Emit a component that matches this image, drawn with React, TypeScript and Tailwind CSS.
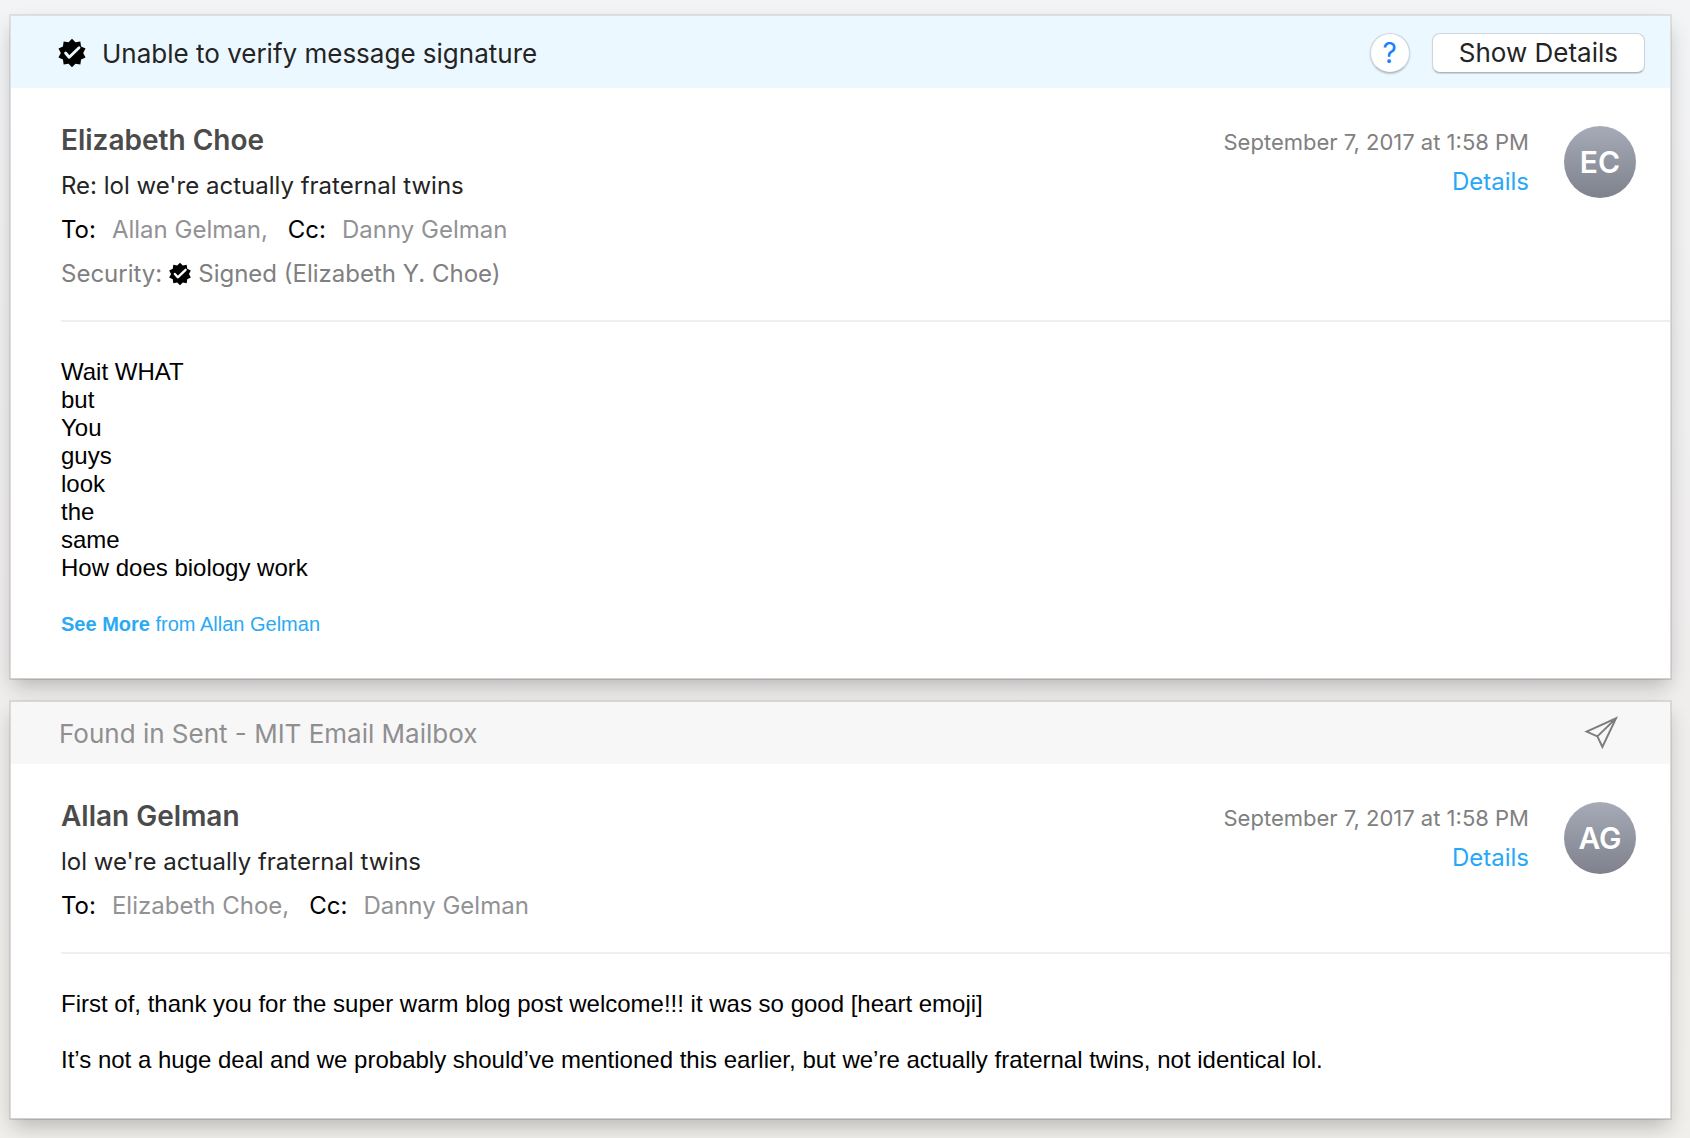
import React, { type ReactNode } from "react";

const SANS = "font-['Inter','Liberation_Sans',sans-serif]";

/* Ten-pointed seal outline, centred on the origin */
const SEAL_POINTS = Array.from({ length: 20 }, (_, i) => {
  const radius = i % 2 === 0 ? 14.2 : 11.2;
  const angle = (i * Math.PI) / 10;
  return `${(radius * Math.sin(angle)).toFixed(2)},${(-radius * Math.cos(angle)).toFixed(2)}`;
}).join(" ");

function SealIcon({ className, check }: { className: string; check: string }) {
  return (
    <svg viewBox="-15 -15 30 30" className={className} aria-hidden="true">
      <polygon points={SEAL_POINTS} fill="#000" />
      <path
        d="M-6.4 0 L-2.8 4.2 L7 -5.2"
        fill="none"
        stroke={check}
        strokeWidth="2.9"
        strokeLinecap="round"
        strokeLinejoin="round"
      />
    </svg>
  );
}

function PaperPlaneIcon() {
  return (
    <svg viewBox="0 0 36 36" className="size-9 shrink-0" role="img" aria-label="Sent">
      <path
        d="M3.6 16.6 L33 3.4 L19.4 32 L14.4 21.4 Z M14.4 21.4 L33 3.4"
        fill="none"
        stroke="#7d7d7d"
        strokeWidth="2"
        strokeLinejoin="miter"
      />
    </svg>
  );
}

type Message = {
  from: string;
  initials: string;
  subject: string;
  to: string;
  cc: string;
  date: string;
};

function MessageCard({
  message,
  banner,
  security,
  divider,
  children,
}: {
  message: Message;
  banner: ReactNode;
  security?: ReactNode;
  divider: string;
  children: ReactNode;
}) {
  return (
    <article className="relative border-2 border-black/8 border-b-black/12 bg-white bg-clip-padding shadow-[0_10px_20px_-4px_rgba(0,0,0,0.24)]">
      {banner}
      <div className="pl-[50px]">
        <header className={`flex items-start gap-[35px] border-b-2 pt-7 pr-[34px] pb-6 ${divider}`}>
          <div className="min-w-0 flex-1 text-[24px] leading-[44px]">
            <h2 className="text-[28px] leading-[48px] font-semibold text-[#4b4b4b]">{message.from}</h2>
            <p className="text-[#242424]">{message.subject}</p>
            <p className="flex">
              <span className="mr-4 text-black">To:</span>
              <span className="mr-5 text-[#929295]">{message.to},</span>
              <span className="mr-4 text-black">Cc:</span>
              <span className="text-[#929295]">{message.cc}</span>
            </p>
            {security}
          </div>
          <div className="mt-1.5 flex flex-col items-end leading-10">
            <time className="text-[22px] text-[#808080]">{message.date}</time>
            <a href="#details" className="text-[24px] text-[#27a8f7]">Details</a>
          </div>
          <div className="mt-2.5 flex size-[72px] items-center justify-center rounded-full bg-linear-to-b from-[#a6abb7] to-[#7f828d] text-[30px] font-semibold text-white">
            {message.initials}
          </div>
        </header>
        <div className="pt-9 pr-[34px] pb-11 font-['Liberation_Sans',Arial,sans-serif] text-[24px] leading-7 text-black">
          {children}
        </div>
      </div>
    </article>
  );
}

const LINES = ["Wait WHAT", "but", "You", "guys", "look", "the", "same", "How does biology work"];

export default function App() {
  return (
    <main
      className={`flex min-h-screen flex-col gap-5 bg-linear-to-b from-[#f3f4f6] via-[#f0eeee] to-[#f0efeb] pt-[14px] pr-[18px] pb-[18px] pl-[9px] ${SANS}`}
    >
      <MessageCard
        divider="border-[#f0eeef]"
        message={{
          from: "Elizabeth Choe",
          initials: "EC",
          subject: "Re: lol we're actually fraternal twins",
          to: "Allan Gelman",
          cc: "Danny Gelman",
          date: "September 7, 2017 at 1:58 PM",
        }}
        banner={
          <div className="flex h-[72px] items-center bg-[#ecf8ff] pt-0.5 pr-[25px] pl-[46px]">
            <SealIcon className="size-[30px] shrink-0" check="#ecf8ff" />
            <p className="ml-[15px] flex-1 text-[26px] text-[#242424]">Unable to verify message signature</p>
            <button
              type="button"
              aria-label="Help"
              className="size-10 rounded-full border border-[#ccd6dc] border-b-[#b4bcc1] bg-white text-[28px] leading-9 text-[#1a80fb] shadow-[0_1px_2px_rgba(0,0,0,0.2)]"
            >
              ?
            </button>
            <button
              type="button"
              className="ml-[22px] h-10 rounded-lg border border-[#ccd6dc] border-b-[#b0b6ba] bg-white px-[26px] text-[26px] leading-9 text-[#242424] shadow-[0_1px_1px_rgba(0,0,0,0.15)]"
            >
              Show Details
            </button>
          </div>
        }
        security={
          <p className="flex items-center text-[#808080]">
            Security:
            <SealIcon className="mx-1.5 size-6" check="#ffffff" />
            Signed (Elizabeth Y. Choe)
          </p>
        }
      >
        {LINES.map((line) => (
          <p key={line}>{line}</p>
        ))}
        <a href="#thread" className="-mb-1 mt-7 block text-[20px] leading-7 text-[#2aaaf5]">
          <b>See More</b> from Allan Gelman
        </a>
      </MessageCard>

      <MessageCard
        divider="border-[#f2f0ec]"
        message={{
          from: "Allan Gelman",
          initials: "AG",
          subject: "lol we're actually fraternal twins",
          to: "Elizabeth Choe",
          cc: "Danny Gelman",
          date: "September 7, 2017 at 1:58 PM",
        }}
        banner={
          <div className="flex h-[62px] items-center justify-between bg-[#f8f7f7] pr-[51px] pl-12">
            <p className="text-[26px] text-[#8f8f92]">Found in Sent - MIT Email Mailbox</p>
            <PaperPlaneIcon />
          </div>
        }
      >
        <p>First of, thank you for the super warm blog post welcome!!! it was so good [heart emoji]</p>
        <p className="mt-7">
          It’s not a huge deal and we probably should’ve mentioned this earlier, but we’re actually fraternal twins, not
          identical lol.
        </p>
      </MessageCard>
    </main>
  );
}
